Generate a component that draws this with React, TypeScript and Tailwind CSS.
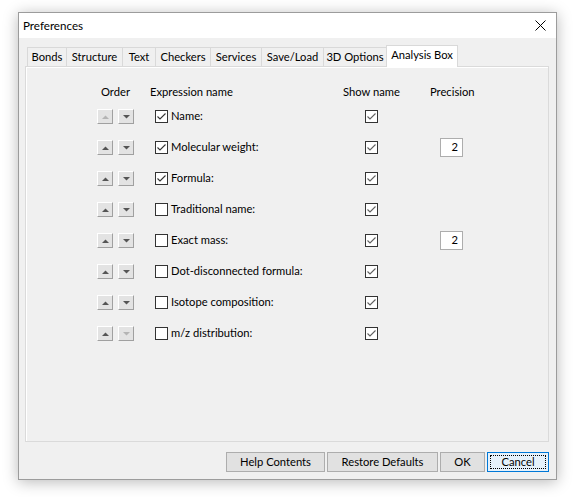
import React from "react";

const rows = [
  { label: "Name:", checked: true, precision: false },
  { label: "Molecular weight:", checked: true, precision: true },
  { label: "Formula:", checked: true, precision: false },
  { label: "Traditional name:", checked: false, precision: false },
  { label: "Exact mass:", checked: false, precision: true },
  { label: "Dot-disconnected formula:", checked: false, precision: false },
  { label: "Isotope composition:", checked: false, precision: false },
  { label: "m/z distribution:", checked: false, precision: false },
];

const tabs = [
  { name: "Bonds", w: "w-[39px]" },
  { name: "Structure", w: "w-[56px]" },
  { name: "Text", w: "w-[33px]" },
  { name: "Checkers", w: "w-[55px]" },
  { name: "Services", w: "w-[51px]" },
  { name: "Save/Load", w: "w-[62px]" },
  { name: "3D Options", w: "w-[63px]" },
];

function ArrowButton(props: { dir: "up" | "down"; disabled?: boolean }) {
  const color = props.disabled ? "#b4b4b4" : "#555555";
  return (
    <div className="flex h-[15px] w-[16px] items-center justify-center border-b border-l border-r border-t border-b-[#a0a0a0] border-l-white border-r-[#a0a0a0] border-t-white bg-[#e3e3e3]">
      <svg width="7" height="4" viewBox="0 0 7 4">
        {props.dir === "up" ? (
          <polygon points="0,4 3.5,0.5 7,4" fill={color} />
        ) : (
          <polygon points="0,0 3.5,3.5 7,0" fill={color} />
        )}
      </svg>
    </div>
  );
}

function CheckBox(props: { checked: boolean; light?: boolean }) {
  return (
    <div className="flex h-[13px] w-[13px] items-center justify-center border border-[#333333] bg-white">
      {props.checked && (
        <svg width="11" height="11" viewBox="0 0 11 11">
          <polyline
            points="1.5,5.5 4,8 9.5,2.5"
            fill="none"
            stroke={props.light ? "#606060" : "#333333"}
            strokeWidth="1.1"
          />
        </svg>
      )}
    </div>
  );
}

function Button(props: { label: string; w: string; focused?: boolean }) {
  return (
    <div
      className={
        props.focused
          ? `relative flex h-[20px] ${props.w} items-center justify-center border border-[#0078d7] bg-[#e5f1fb]`
          : `flex h-[20px] ${props.w} items-center justify-center border border-[#adadad] bg-[#e1e1e1]`
      }
    >
      {props.focused && (
        <div className="absolute inset-[2px] border border-dotted border-black" />
      )}
      <span>{props.label}</span>
    </div>
  );
}

export default function App() {
  return (
    <div
      className="h-[497px] w-[578px] bg-white pl-[18px] pt-[12px] text-[11.2px] text-black"
      style={{ fontFamily: "Lato, 'Noto Sans', sans-serif" }}
    >
      <div className="flex h-[468px] w-[539px] flex-col border border-[#9c9c9c] bg-[#f0f0f0] shadow-[0_2px_14px_rgba(0,0,0,0.28)]">
        {/* title bar */}
        <div className="flex h-[25px] items-center justify-between bg-white pl-[4px] pr-[10px]">
          <span className="text-[11.6px]">Preferences</span>
          <svg width="11" height="11" viewBox="0 0 11 11">
            <line x1="0.5" y1="0.5" x2="10.5" y2="10.5" stroke="#000" strokeWidth="1" />
            <line x1="10.5" y1="0.5" x2="0.5" y2="10.5" stroke="#000" strokeWidth="1" />
          </svg>
        </div>

        {/* tabs */}
        <div className="mt-[7px] flex h-[21px] items-end pl-[8px]">
          {tabs.map((t) => (
            <div
              key={t.name}
              className={`flex h-[19px] ${t.w} items-center justify-center border-l border-t border-[#d9d9d9] bg-[#f0f0f0]`}
            >
              {t.name}
            </div>
          ))}
          <div className="relative z-10 -mb-px flex h-[22px] w-[72px] items-center justify-center border-l border-r border-t border-[#d9d9d9] bg-white pb-[2px]">
            Analysis Box
          </div>
        </div>

        {/* panel */}
        <div className="ml-[6px] mr-[7px] h-[376px] border border-[#dadada] bg-[#f0f0f0] pl-[71px] pt-[16px] shadow-[inset_1px_1px_0_#ffffff]">
          <div className="flex h-[18px] items-center">
            <div className="w-[37px] text-center">Order</div>
            <div className="w-[16px]" />
            <div className="w-[193px]">Expression name</div>
            <div className="w-[87px]">Show name</div>
            <div>Precision</div>
          </div>
          {rows.map((r, i) => (
            <div key={r.label} className="flex h-[31px] items-center">
              <div className="flex w-[58px] gap-[5px]">
                <ArrowButton dir="up" disabled={i === 0} />
                <ArrowButton dir="down" disabled={i === rows.length - 1} />
              </div>
              <div className="flex w-[188px] items-center">
                <CheckBox checked={r.checked} />
                <span className="ml-[3px]">{r.label}</span>
              </div>
              <div className="w-[87px] pl-[22px]">
                <CheckBox checked light />
              </div>
              {r.precision && (
                <div className="ml-[10px] flex h-[19px] w-[23px] items-center justify-end border border-[#adadad] bg-white pr-[4px]">
                  2
                </div>
              )}
            </div>
          ))}
        </div>

        {/* buttons */}
        <div className="mt-[10px] flex justify-end gap-[2px] pr-[7px]">
          <Button label="Help Contents" w="w-[99px]" />
          <Button label="Restore Defaults" w="w-[111px]" />
          <Button label="OK" w="w-[45px]" />
          <Button label="Cancel" w="w-[62px]" focused />
        </div>
      </div>
    </div>
  );
}
